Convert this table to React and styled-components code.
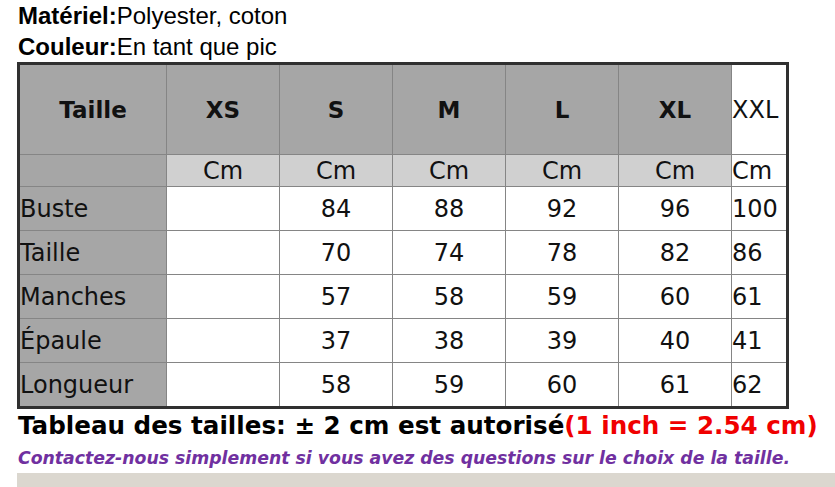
import React from "react";
import styled, { createGlobalStyle } from "styled-components";

const GlobalStyle = createGlobalStyle`
  body {
    margin: 0;
    background: #ffffff;
    color: #000000;
  }
`;

const Page = styled.div`
  width: 835px;
  height: 487px;
  overflow: hidden;
  padding-left: 17px;
  box-sizing: border-box;
`;

const InfoLine = styled.div`
  font-family: "Liberation Sans", Arial, sans-serif;
  font-size: 24px;
  line-height: 31px;
  padding-left: 1px;
  color: #000;
`;

const Label = styled.b`
  font-weight: 700;
`;

const SizeTable = styled.table`
  border-collapse: collapse;
  table-layout: fixed;
  width: 772px;
  border: 3px solid #303030;
  font-family: "DejaVu Sans", Verdana, sans-serif;
  font-size: 24px;
  color: #111;
`;

const Cell = styled.td`
  border: 1px solid #858585;
  padding: 0;
  height: ${(p) => p.$h || 43}px;
  background: ${(p) => p.$bg || "#ffffff"};
  text-align: ${(p) => p.$align || "center"};
  font-weight: ${(p) => (p.$bold ? 700 : 400)};
  font-size: ${(p) => (p.$bold ? 23 : 24)}px;
  vertical-align: middle;
  white-space: nowrap;
  overflow: hidden;
`;

const Note = styled.div`
  font-family: "DejaVu Sans", Verdana, sans-serif;
  font-weight: 700;
  font-size: 24.6px;
  line-height: 34px;
  padding-left: 1px;
  color: #000;
`;

const Red = styled.span`
  color: #f00000;
`;

const Contact = styled.div`
  font-family: "DejaVu Sans", Verdana, sans-serif;
  font-style: italic;
  font-weight: 700;
  font-size: 17.3px;
  line-height: 30px;
  padding-left: 1px;
  color: #7030a0;
`;

const Band = styled.div`
  height: 20px;
  background: #dbd7cf;
`;

const sizes = ["XS", "S", "M", "L", "XL"];
const rows = [
  ["Buste", "", "84", "88", "92", "96", "100"],
  ["Taille", "", "70", "74", "78", "82", "86"],
  ["Manches", "", "57", "58", "59", "60", "61"],
  ["Épaule", "", "37", "38", "39", "40", "41"],
  ["Longueur", "", "58", "59", "60", "61", "62"],
];

const DARK = "#a6a6a6";
const LIGHT = "#d0d0d0";

export default function App() {
  return (
    <Page>
      <GlobalStyle />
      <InfoLine>
        <Label>Matériel:</Label>Polyester, coton
      </InfoLine>
      <InfoLine>
        <Label>Couleur:</Label>En tant que pic
      </InfoLine>
      <SizeTable>
        <colgroup>
          <col style={{ width: 148 }} />
          {sizes.map((s) => (
            <col key={s} style={{ width: 113 }} />
          ))}
          <col style={{ width: 56 }} />
        </colgroup>
        <tbody>
          <tr>
            <Cell $h={89} $bg={DARK} $bold>
              Taille
            </Cell>
            {sizes.map((s) => (
              <Cell key={s} $h={89} $bg={DARK} $bold>
                {s}
              </Cell>
            ))}
            <Cell $h={89} $align="left">
              XXL
            </Cell>
          </tr>
          <tr>
            <Cell $h={31} $bg={DARK} />
            {sizes.map((s) => (
              <Cell key={s} $h={31} $bg={LIGHT}>
                Cm
              </Cell>
            ))}
            <Cell $h={31} $align="left">
              Cm
            </Cell>
          </tr>
          {rows.map((r) => (
            <tr key={r[0]}>
              <Cell $bg={DARK} $align="left">
                {r[0]}
              </Cell>
              {r.slice(1, 6).map((v, i) => (
                <Cell key={i}>{v}</Cell>
              ))}
              <Cell $align="left">{r[6]}</Cell>
            </tr>
          ))}
        </tbody>
      </SizeTable>
      <Note>
        Tableau des tailles: ± 2 cm est autorisé<Red>(1 inch = 2.54 cm)</Red>
      </Note>
      <Contact>
        Contactez-nous simplement si vous avez des questions sur le choix de la taille.
      </Contact>
      <Band />
    </Page>
  );
}
